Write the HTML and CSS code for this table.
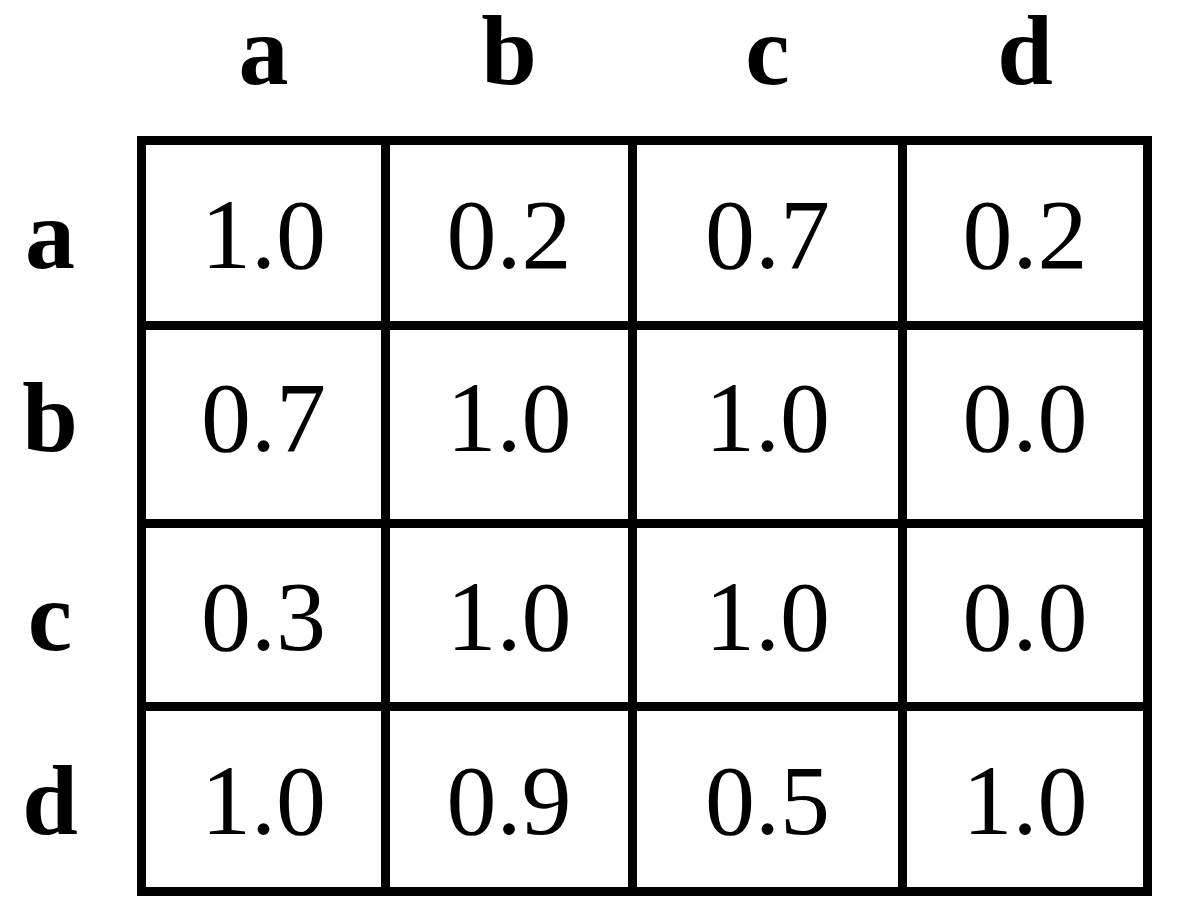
FILE: index.html
```html
<!DOCTYPE html>
<html>
<head>
<meta charset="utf-8">
<link rel="stylesheet" href="styles.css">
</head>
<body>
<div class="page">
  <div class="corner"></div>
  <div class="col-heads">
    <div class="head">a</div>
    <div class="head">b</div>
    <div class="head">c</div>
    <div class="head">d</div>
  </div>
  <div class="row-heads">
    <div class="rhead">a</div>
    <div class="rhead tall">b</div>
    <div class="rhead">c</div>
    <div class="rhead">d</div>
  </div>
  <div class="matrix">
    <div class="cell">1.0</div><div class="cell">0.2</div><div class="cell">0.7</div><div class="cell">0.2</div>
    <div class="cell tall">0.7</div><div class="cell tall">1.0</div><div class="cell tall">1.0</div><div class="cell tall">0.0</div>
    <div class="cell">0.3</div><div class="cell">1.0</div><div class="cell">1.0</div><div class="cell">0.0</div>
    <div class="cell">1.0</div><div class="cell">0.9</div><div class="cell">0.5</div><div class="cell">1.0</div>
  </div>
</div>
</body>
</html>
```

FILE: styles.css
```css
html, body {
  margin: 0;
  padding: 0;
  background: #ffffff;
}

body {
  font-family: "Liberation Serif", "Times New Roman", serif;
  color: #000000;
  width: 1177px;
  height: 922px;
  overflow: hidden;
}

.page {
  display: grid;
  grid-template-columns: 137px 1015px;
  grid-template-rows: 136px 760px;
}

.col-heads {
  display: grid;
  grid-template-columns: 235px 238px 261px 236px;
  column-gap: 9px;
  padding-left: 9px;
  padding-top: 1px;
}

.head {
  font-weight: bold;
  font-size: 100px;
  line-height: 100px;
  text-align: center;
}

.row-heads {
  display: grid;
  grid-template-rows: 176px 189px 174px 176px;
  row-gap: 9px;
  padding-top: 9px;
}

.rhead {
  width: 100px;
  font-weight: bold;
  font-size: 100px;
  line-height: 100px;
  display: flex;
  align-items: center;
  justify-content: center;
  padding-top: 4px;
  box-sizing: border-box;
}

.matrix {
  display: grid;
  grid-template-columns: 235px 238px 261px 236px;
  grid-template-rows: 176px 189px 174px 176px;
  gap: 9px;
  padding: 9px;
  background: #000000;
}

.cell {
  background: #ffffff;
  font-size: 100px;
  line-height: 100px;
  display: flex;
  align-items: center;
  justify-content: center;
  padding-top: 4px;
  box-sizing: border-box;
}

.tall {
  padding-top: 0;
  padding-bottom: 13px;
}
```
